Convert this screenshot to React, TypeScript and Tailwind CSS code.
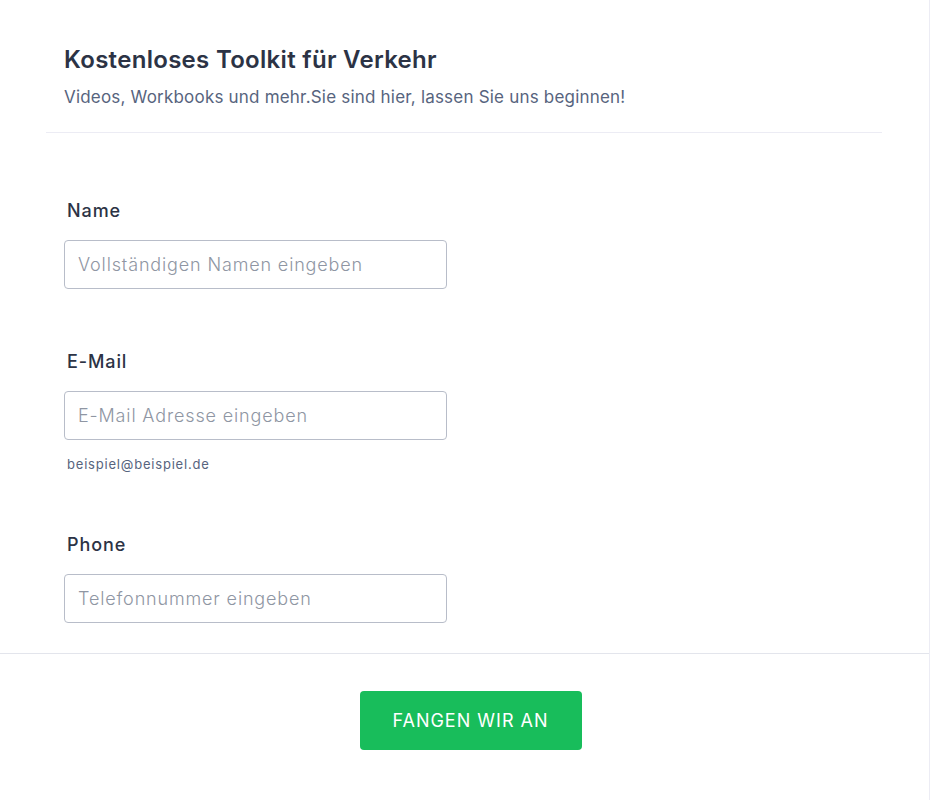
const Field = ({
  label,
  placeholder,
  hint,
  type = "text",
}: {
  label: string;
  placeholder: string;
  hint?: string;
  type?: string;
}) => {
  return (
    <div className="flex flex-col">
      <label className="ml-[3px] text-[18px] leading-[28px] font-medium tracking-[0.9px] text-[#2c3345]">
        {label}
      </label>
      <input
        type={type}
        placeholder={placeholder}
        className="mt-[15px] w-[383px] h-[49px] rounded-[4px] border border-[#b8bdc9] px-[13px] text-[18px] tracking-[0.85px] text-[#2c3345] placeholder:text-[#8f96a3] font-light focus:outline-none"
      />
      {hint && (
        <span className="mt-[15px] ml-[3px] text-[13px] leading-[18px] tracking-[0.8px] text-[#57647e]">
          {hint}
        </span>
      )}
    </div>
  );
};

const App = () => {
  return (
    <div
      className="w-[930px] h-[800px] bg-white border-r border-[#ececf4] flex flex-col"
      style={{ fontFamily: "Inter, 'Noto Sans', sans-serif" }}
    >
      {/* Header */}
      <div className="pt-[44px] ml-[46px] mr-[47px] border-b border-[#ececf4] pb-[23px]">
        <div className="pl-[18px]">
          <h1 className="text-[24px] leading-[32px] font-semibold tracking-[0.3px] text-[#2c3345]">
            Kostenloses Toolkit für Verkehr
          </h1>
          <p className="mt-[9px] text-[17px] leading-[24px] tracking-[0.2px] text-[#57647e]">
            Videos, Workbooks und mehr.Sie sind hier, lassen Sie uns beginnen!
          </p>
        </div>
      </div>

      {/* Form */}
      <div className="pl-[64px] pt-[64px] flex flex-col">
        <Field label="Name" placeholder="Vollständigen Namen eingeben" />
        <div className="mt-[59px]">
          <Field
            label="E-Mail"
            type="email"
            placeholder="E-Mail Adresse eingeben"
            hint="beispiel@beispiel.de"
          />
        </div>
        <div className="mt-[58px]">
          <Field label="Phone" type="tel" placeholder="Telefonnummer eingeben" />
        </div>
      </div>

      {/* Footer */}
      <div className="mt-[30px] border-t border-[#e3e5ec] flex justify-center pl-[12px] pt-[37px]">
        <button className="w-[222px] h-[59px] rounded-[4px] bg-[#18bd5b] text-white text-[18px] tracking-[1px] font-normal">
          FANGEN WIR AN
        </button>
      </div>
    </div>
  );
};

export default App;
